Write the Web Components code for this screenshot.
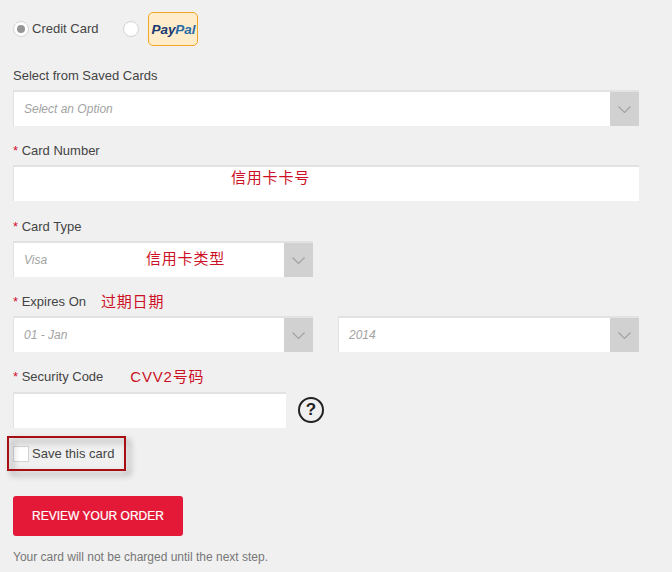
<!DOCTYPE html>
<html>
<head>
<meta charset="utf-8">
<title>Payment</title>
<style>
  html, body { margin: 0; background: #f0f0f0; }
  body { font: 13px "Liberation Sans", Arial, sans-serif; color: #444; }
</style>
</head>
<body>
<checkout-form></checkout-form>

<script>
const NOTE_FONT = '"Liberation Sans", "Noto Sans CJK SC", sans-serif'

class FormField extends HTMLElement {
  constructor () {
    super()
    const required = this.hasAttribute('required') ? '<b>*</b> ' : ''
    this.attachShadow({ mode: 'open' }).innerHTML = `
      <style>
        :host { display: block; }
        label { display: flex; align-items: center; height: 16px; line-height: 16px; color: #444; white-space: pre; }
        b { color: #d0112b; font-weight: 400; }
      </style>
      <label><span>${required}${this.getAttribute('label')}</span><slot name="note"></slot></label>
      <slot></slot>`
  }
}

class TextBox extends HTMLElement {
  constructor () {
    super()
    this.attachShadow({ mode: 'open' }).innerHTML = `
      <style>
        :host { display: block; position: relative; box-sizing: border-box; height: 36px; margin-top: 6px;
                background: #fff; border-top: 2px solid #e2e2e2; border-left: 1px solid #e2e2e2; }
      </style>
      <slot></slot>`
  }
}

class SelectBox extends HTMLElement {
  constructor () {
    super()
    this.attachShadow({ mode: 'open' }).innerHTML = `
      <style>
        :host { display: flex; position: relative; box-sizing: border-box; height: 36px; margin-top: 6px;
                background: #fff; border-top: 2px solid #e2e2e2; border-left: 1px solid #e2e2e2; }
        span { flex: 1; padding-left: 10px; line-height: 34px; font-size: 12px; font-style: italic; color: #a3a3a3; }
        i { display: flex; align-items: center; justify-content: center; width: 29px; background: #d1d1d1; }
      </style>
      <span>${this.getAttribute('value')}</span>
      <slot></slot>
      <i><svg width="13" height="7" viewBox="0 0 13 7"><path d="M.5 .5l6 6 6-6" fill="none" stroke="#a0a0a0" stroke-width="1.1"/></svg></i>`
  }
}

class RedNote extends HTMLElement {
  constructor () {
    super()
    this.attachShadow({ mode: 'open' }).innerHTML = `
      <style>
        :host { display: inline-block; color: #cc1126; font: 15px/16px ${NOTE_FONT}; letter-spacing: .8px; white-space: nowrap; }
      </style>
      <slot></slot>`
  }
}

class RadioDot extends HTMLElement {
  constructor () {
    super()
    const dot = this.hasAttribute('checked') ? '<u></u>' : ''
    this.attachShadow({ mode: 'open' }).innerHTML = `
      <style>
        :host { display: flex; align-items: center; justify-content: center; box-sizing: border-box; width: 16px; height: 16px;
                border: 1px solid #d4d4d4; border-radius: 50%; background: #fff; }
        u { width: 8px; height: 8px; border-radius: 50%; background: #969696; }
      </style>
      ${dot}`
  }
}

class PaypalBadge extends HTMLElement {
  constructor () {
    super()
    this.attachShadow({ mode: 'open' }).innerHTML = `
      <style>
        :host { display: flex; align-items: center; justify-content: center; box-sizing: border-box; width: 50px; height: 34px;
                border: 1px solid #f5a623; border-radius: 5px; background: #ffeccb;
                font: italic 700 13.5px "Liberation Sans", Arial, sans-serif; letter-spacing: -.1px; }
        .a { color: #17396f; }
        .b { color: #2a6aa5; }
      </style>
      <span class="a">Pay</span><span class="b">Pal</span>`
  }
}

class HelpIcon extends HTMLElement {
  constructor () {
    super()
    this.attachShadow({ mode: 'open' }).innerHTML = `
      <style>
        :host { display: flex; align-items: center; justify-content: center; box-sizing: border-box; width: 26px; height: 26px;
                border: 2px solid #222; border-radius: 50%; color: #222; font: 700 17px/1 "Liberation Sans", Arial, sans-serif; }
      </style>
      ?`
  }
}

class SaveCheck extends HTMLElement {
  constructor () {
    super()
    this.attachShadow({ mode: 'open' }).innerHTML = `
      <style>
        :host { display: flex; position: relative; align-items: center; gap: 3px; height: 16px; }
        i { box-sizing: border-box; width: 16px; height: 16px; background: #fff; border: 1px solid #d4d4d4; }
        span { padding-bottom: 2px; }
        /* the red marker drawn over the screenshot */
        em { position: absolute; left: -6px; top: -10px; box-sizing: border-box; width: 119px; height: 35px;
             border: 2px solid #a80f14; filter: drop-shadow(4px 4px 3px rgba(0,0,0,.4)); }
      </style>
      <i></i><span>Save this card</span><em></em>`
  }
}

class CheckoutForm extends HTMLElement {
  constructor () {
    super()
    this.attachShadow({ mode: 'open' }).innerHTML = `
      <style>
        :host { display: block; padding: 12px 33px 0 13px; }
        .pay { display: flex; align-items: center; height: 34px; }
        .pay span { margin-left: 3px; padding-bottom: 2px; }
        .pay radio-dot + span + radio-dot { margin-left: 25px; }
        .pay paypal-badge { margin-left: 9px; }
        form-field { margin-top: 17px; }
        form-field.first { margin-top: 22px; }
        .narrow { width: 300px; }
        .row { display: flex; gap: 25px; }
        .row > * { width: 300px; }
        .row > :last-child { width: 301px; }
        .code { display: flex; align-items: center; gap: 12px; }
        .code text-box { width: 273px; }
        .code help-icon { margin-top: 5px; }
        .over { position: absolute; }
        save-check { margin-top: 18px; }
        button { display: block; margin-top: 34px; width: 170px; height: 40px; padding: 0; border: 0; border-radius: 3px;
                 background: #e41937; color: #fff; font: 12px "Liberation Sans", Arial, sans-serif; text-transform: uppercase;
                 -webkit-text-stroke: .2px #fff; }
        p { margin: 14px 0 0; font-size: 12px; line-height: 14px; color: #777; }
      </style>
      <div class="pay">
        <radio-dot checked></radio-dot><span>Credit Card</span>
        <radio-dot></radio-dot><paypal-badge></paypal-badge>
      </div>

      <form-field class="first" label="Select from Saved Cards">
        <select-box value="Select an Option"></select-box>
      </form-field>

      <form-field required label="Card Number">
        <text-box><red-note class="over" style="left:217px;top:3px">信用卡卡号</red-note></text-box>
      </form-field>

      <form-field required label="Card Type" style="margin-top:18px">
        <select-box class="narrow" value="Visa"><red-note class="over" style="left:132px;top:8px">信用卡类型</red-note></select-box>
      </form-field>

      <form-field required label="Expires On">
        <red-note slot="note" style="margin-left:15px">过期日期</red-note>
        <div class="row">
          <select-box value="01 - Jan"></select-box>
          <select-box value="2014"></select-box>
        </div>
      </form-field>

      <form-field required label="Security Code">
        <red-note slot="note" style="margin-left:27px">CVV2号码</red-note>
        <div class="code" style="margin-top:1px">
          <text-box></text-box><help-icon></help-icon>
        </div>
      </form-field>

      <save-check></save-check>
      <button>Review your order</button>
      <p>Your card will not be charged until the next step.</p>`
  }
}

customElements.define('form-field', FormField)
customElements.define('text-box', TextBox)
customElements.define('select-box', SelectBox)
customElements.define('red-note', RedNote)
customElements.define('radio-dot', RadioDot)
customElements.define('paypal-badge', PaypalBadge)
customElements.define('help-icon', HelpIcon)
customElements.define('save-check', SaveCheck)
customElements.define('checkout-form', CheckoutForm)
</script>
</body>
</html>
